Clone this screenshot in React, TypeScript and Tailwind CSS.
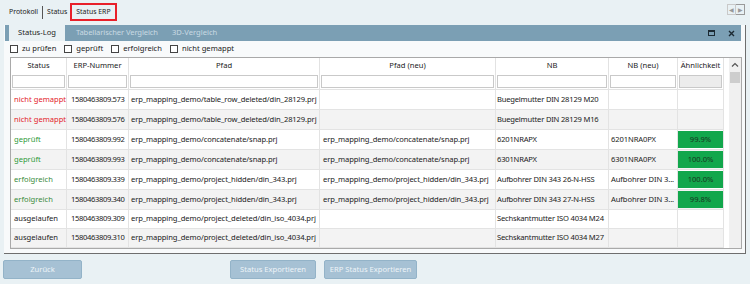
import React from 'react';

type Row = {
  status: string;
  tone: 'red' | 'green' | 'ok' | 'none';
  erp: string;
  pfad: string;
  pfadNeu: string;
  nb: string;
  nbNeu: string;
  sim: string;
};

const rows: Row[] = [
  { status: 'nicht gemappt', tone: 'red', erp: '1580463809.573', pfad: 'erp_mapping_demo/table_row_deleted/din_28129.prj', pfadNeu: '', nb: 'Buegelmutter DIN 28129 M20', nbNeu: '', sim: '' },
  { status: 'nicht gemappt', tone: 'red', erp: '1580463809.576', pfad: 'erp_mapping_demo/table_row_deleted/din_28129.prj', pfadNeu: '', nb: 'Buegelmutter DIN 28129 M16', nbNeu: '', sim: '' },
  { status: 'geprüft', tone: 'green', erp: '1580463809.992', pfad: 'erp_mapping_demo/concatenate/snap.prj', pfadNeu: 'erp_mapping_demo/concatenate/snap.prj', nb: '6201NRAPX', nbNeu: '6201NRA0PX', sim: '99.9%' },
  { status: 'geprüft', tone: 'green', erp: '1580463809.993', pfad: 'erp_mapping_demo/concatenate/snap.prj', pfadNeu: 'erp_mapping_demo/concatenate/snap.prj', nb: '6301NRAPX', nbNeu: '6301NRA0PX', sim: '100.0%' },
  { status: 'erfolgreich', tone: 'ok', erp: '1580463809.339', pfad: 'erp_mapping_demo/project_hidden/din_343.prj', pfadNeu: 'erp_mapping_demo/project_hidden/din_343.prj', nb: 'Aufbohrer DIN 343 26-N-HSS', nbNeu: 'Aufbohrer DIN 3...', sim: '100.0%' },
  { status: 'erfolgreich', tone: 'ok', erp: '1580463809.340', pfad: 'erp_mapping_demo/project_hidden/din_343.prj', pfadNeu: 'erp_mapping_demo/project_hidden/din_343.prj', nb: 'Aufbohrer DIN 343 27-N-HSS', nbNeu: 'Aufbohrer DIN 3...', sim: '99.8%' },
  { status: 'ausgelaufen', tone: 'none', erp: '1580463809.309', pfad: 'erp_mapping_demo/project_deleted/din_iso_4034.prj', pfadNeu: '', nb: 'Sechskantmutter ISO 4034 M24', nbNeu: '', sim: '' },
  { status: 'ausgelaufen', tone: 'none', erp: '1580463809.310', pfad: 'erp_mapping_demo/project_deleted/din_iso_4034.prj', pfadNeu: '', nb: 'Sechskantmutter ISO 4034 M27', nbNeu: '', sim: '' },
  { status: 'nicht gemappt', tone: 'red', erp: '1580463809.311', pfad: 'erp_mapping_demo/project_deleted/din_iso_4034.prj', pfadNeu: '', nb: 'Sechskantmutter ISO 4034 M30', nbNeu: '', sim: '' },
];

const toneClass = {
  red: 'text-[#e3232c]',
  green: 'text-[#2f9a3a]',
  ok: 'text-[#3b8b3b]',
  none: 'text-[#222]',
};

// row heights as measured, the table rows are not quite 20px each
const rowH = ['h-[20px]', 'h-[20px]', 'h-[20px]', 'h-[20px]', 'h-[20px]', 'h-[20px]', 'h-[19px]', 'h-[19px]', 'h-[20px]'];

const cols = 'grid grid-cols-[56px_62px_191px_176px_113px_69px_46px]';
const cell = 'flex items-center border-r border-[#e3e3e3] whitespace-nowrap overflow-hidden';

function Checkbox({ label }: { label: string }) {
  return (
    <label className="flex items-center gap-[4px]">
      <span className="w-[8px] h-[8px] border border-[#444] bg-white" />
      <span>{label}</span>
    </label>
  );
}

function Btn({ label, w }: { label: string; w: string }) {
  return (
    <button
      className={`${w} h-[19px] rounded-[2px] bg-[#a6c1d4] border border-[#93b3c8] text-[#eef4f8]`}
    >
      {label}
    </button>
  );
}

export default function App() {
  return (
    <div
      className="w-[750px] h-[284px] overflow-hidden bg-[#e9f1f4] text-[7.6px] text-[#222] leading-none"
      style={{ fontFamily: '"Noto Sans", "Open Sans", sans-serif' }}
    >
      {/* top tabs */}
      <div className="h-[25px] flex items-center justify-between pl-[9px] pr-[5px] text-[6.9px]">
        <div className="flex items-center h-full">
          <span>Protokoll</span>
          <span className="w-px h-[13px] bg-[#555] mx-[4px]" />
          <span>Status</span>
          <span className="ml-[3px] h-[18px] mt-[-1px] px-[4px] flex items-center border-2 border-[#e8202a]">
            Status ERP
          </span>
        </div>
        <div className="flex mt-[-6px]">
          <span className="w-[9px] h-[11px] border border-[#c9c9c9] flex items-center justify-center text-[#999] text-[6px]">◀</span>
          <span className="w-[9px] h-[11px] border border-[#9a9a9a] border-l-0 flex items-center justify-center text-[#999] text-[6px]">▶</span>
        </div>
      </div>

      {/* panel */}
      <div className="ml-[4px] w-[742px] h-[229px] bg-[#f8fafb] border-r border-b border-[#6e6e6e]">
        <div className="ml-[1px] mr-[4px] h-[16px] bg-[#7b9fb4] flex items-stretch">
          <div className="ml-[4px] px-[9px] bg-[#e9f1f4] flex items-center text-[#1c1c1c]">Status-Log</div>
          <div className="ml-[11px] flex items-center text-[#c9dae3] tracking-[-0.1px]">Tabellarischer Vergleich</div>
          <div className="ml-[14px] flex items-center text-[#c9dae3]">3D-Vergleich</div>
          <div className="ml-auto flex items-center gap-[13px] pr-[6px]">
            <span className="w-[7px] h-[6px] border border-[#1c2a33] border-t-2" />
            <svg width="7" height="7" viewBox="0 0 7 7">
              <path d="M1 1L6 6M6 1L1 6" stroke="#1c2a33" strokeWidth="1.4" />
            </svg>
          </div>
        </div>

        <div className="h-[16px] flex items-center gap-[8px] pl-[6px]">
          <Checkbox label="zu prüfen" />
          <Checkbox label="geprüft" />
          <Checkbox label="erfolgreich" />
          <Checkbox label="nicht gemappt" />
        </div>

        {/* table */}
        <div className="ml-[6px] w-[732px] h-[192px] border border-[#a9a9a9] bg-white flex overflow-hidden">
          <div className="w-[713px] flex flex-col">
            <div className={`${cols} h-[16px] shrink-0`}>
              {['Status', 'ERP-Nummer', 'Pfad', 'Pfad (neu)', 'NB', 'NB (neu)', 'Ähnlichkeit'].map((h) => (
                <div key={h} className="flex items-center justify-center border-r border-[#e2e2e2]">
                  {h}
                </div>
              ))}
            </div>
            <div className={`${cols} h-[15px] shrink-0`}>
              {[0, 1, 2, 3, 4, 5, 6].map((i) => (
                <div key={i} className="border-r border-[#e2e2e2] px-[1px] py-[1px]">
                  <div
                    className={`h-full border border-[#c9c9c9] ${i === 6 ? 'bg-[#ececec]' : 'bg-white'}`}
                  />
                </div>
              ))}
            </div>
            {rows.map((r, idx) => (
              <div
                key={r.erp}
                className={`${cols} ${rowH[idx]} shrink-0 border-t border-[#e3e3e3] ${idx % 2 === 1 ? 'bg-[#f3f3f3]' : 'bg-white'}`}
              >
                <div className={`${cell} pl-[3px] ${toneClass[r.tone]}`}>{r.status}</div>
                <div className={`${cell} pl-[4px] tracking-[-0.35px]`}>{r.erp}</div>
                <div className={`${cell} pl-[2px] tracking-[-0.1px]`}>{r.pfad}</div>
                <div className={`${cell} pl-[3px] tracking-[-0.1px]`}>{r.pfadNeu}</div>
                <div className={`${cell} pl-[1px] tracking-[-0.2px]`}>{r.nb}</div>
                <div className={`${cell} pl-[2px] tracking-[-0.1px]`}>{r.nbNeu}</div>
                <div className="border-r border-[#e3e3e3] py-[1px]">
                  {r.sim && (
                    <div className="h-full bg-[#12a74c] text-[#1a331f] flex items-center justify-center">{r.sim}</div>
                  )}
                </div>
              </div>
            ))}
          </div>
          <div className="w-[5px]" />
          {/* scrollbar */}
          <div className="w-[12px] bg-[#f0f0f0] flex flex-col items-center">
            <svg className="mt-[4px]" width="8" height="6" viewBox="0 0 8 6">
              <path d="M1 4.5L4 1.5L7 4.5" fill="none" stroke="#555" strokeWidth="1.2" />
            </svg>
            <div className="mt-[4px] w-[10px] h-[11px] bg-[#cdcdcd]" />
          </div>
        </div>
      </div>

      {/* buttons */}
      <div className="mt-[6px] flex pl-[3px]">
        <Btn label="Zurück" w="w-[79px]" />
        <div className="ml-[148px] flex gap-[8px]">
          <Btn label="Status Exportieren" w="w-[86px]" />
          <Btn label="ERP Status Exportieren" w="w-[93px]" />
        </div>
      </div>
    </div>
  );
}
